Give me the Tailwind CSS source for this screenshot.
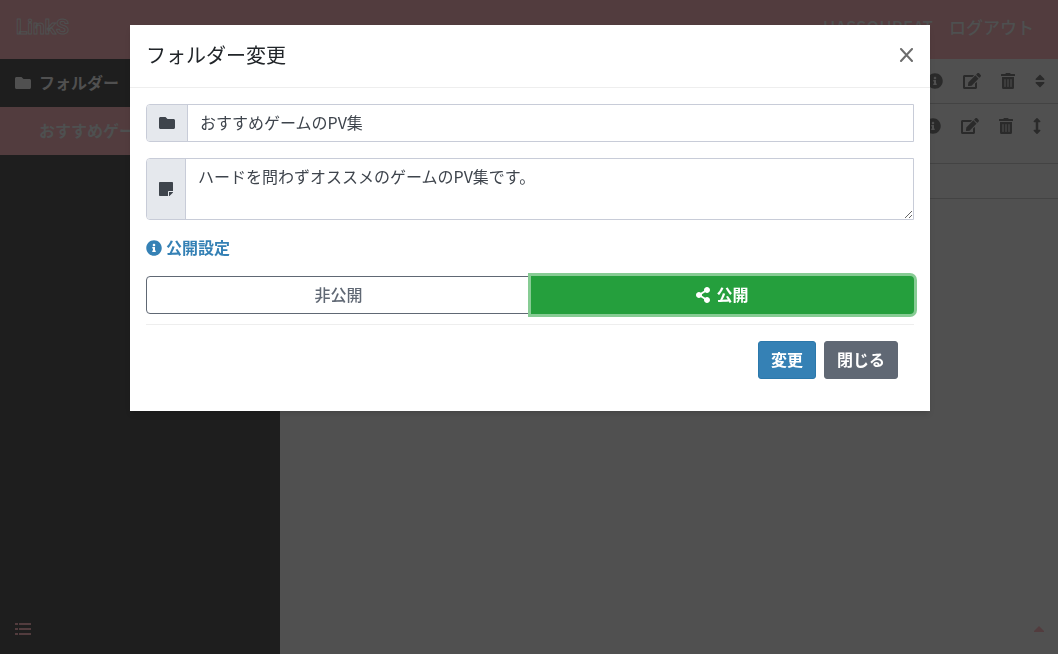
<!DOCTYPE html>
<html lang="ja">
<head>
<meta charset="utf-8">
<meta name="viewport" content="width=device-width, initial-scale=1">
<title>LinkS</title>
<script src="https://cdn.jsdelivr.net/npm/@tailwindcss/browser@4"></script>
</head>
<body class="min-h-screen bg-[#505050] font-['Noto_Sans_CJK_JP',sans-serif] text-base text-[#212529]">
<svg class="hidden" aria-hidden="true">
  <symbol id="folder" viewBox="0 0 512 512"><path d="M464 128H272l-64-64H48C21.49 64 0 85.49 0 112v288c0 26.51 21.49 48 48 48h416c26.51 0 48-21.49 48-48V176c0-26.51-21.49-48-48-48z"/></symbol>
  <symbol id="note" viewBox="0 0 448 512"><path d="M312 320h136V56c0-13.3-10.7-24-24-24H24C10.7 32 0 42.7 0 56v400c0 13.3 10.7 24 24 24h264V344c0-13.2 10.8-24 24-24zm129 55l-98 98c-4.5 4.5-10.6 7-17 7h-6V352h128v6.1c0 6.3-2.5 12.4-7 16.9z"/></symbol>
  <symbol id="info" viewBox="0 0 512 512"><path d="M256 8C119.043 8 8 119.083 8 256c0 136.997 111.043 248 248 248s248-111.003 248-248C504 119.083 392.957 8 256 8zm0 110c23.196 0 42 18.804 42 42s-18.804 42-42 42-42-18.804-42-42 18.804-42 42-42zm56 254c0 6.627-5.373 12-12 12h-88c-6.627 0-12-5.373-12-12v-24c0-6.627 5.373-12 12-12h12v-64h-12c-6.627 0-12-5.373-12-12v-24c0-6.627 5.373-12 12-12h64c6.627 0 12 5.373 12 12v100h12c6.627 0 12 5.373 12 12v24z"/></symbol>
  <symbol id="share" viewBox="0 0 448 512"><path d="M352 320c-22.608 0-43.387 7.819-59.79 20.895l-102.486-64.054a96.551 96.551 0 0 0 0-41.683l102.486-64.054C308.613 184.181 329.392 192 352 192c53.019 0 96-42.981 96-96S405.019 0 352 0s-96 42.981-96 96c0 7.158.79 14.13 2.276 20.841L155.79 180.895C139.387 167.819 118.608 160 96 160c-53.019 0-96 42.981-96 96s42.981 96 96 96c22.608 0 43.387-7.819 59.79-20.895l102.486 64.054A96.301 96.301 0 0 0 256 416c0 53.019 42.981 96 96 96s96-42.981 96-96-42.981-96-96-96z"/></symbol>
  <symbol id="edit" viewBox="0 0 576 512"><path d="M402.6 83.2l90.2 90.2c3.8 3.8 3.8 10 0 13.8L274.4 405.6l-92.8 10.3c-12.4 1.4-22.9-9.1-21.5-21.5l10.3-92.8L388.8 83.2c3.8-3.8 10-3.8 13.8 0zm162-22.9l-48.8-48.8c-15.2-15.2-39.9-15.2-55.2 0l-35.4 35.4c-3.8 3.8-3.8 10 0 13.8l90.2 90.2c3.8 3.8 10 3.8 13.8 0l35.4-35.4c15.2-15.3 15.2-40 0-55.2zM384 346.2V448H64V128h229.8c3.2 0 6.2-1.3 8.5-3.5l40-40c7.6-7.6 2.2-20.5-8.5-20.5H48C21.5 64 0 85.5 0 112v352c0 26.5 21.5 48 48 48h352c26.5 0 48-21.5 48-48V306.2c0-10.7-12.9-16-20.5-8.5l-40 40c-2.2 2.3-3.5 5.3-3.5 8.5z"/></symbol>
  <symbol id="trash" viewBox="0 0 448 512"><path d="M32 464a48 48 0 0 0 48 48h288a48 48 0 0 0 48-48V128H32zm272-256a16 16 0 0 1 32 0v224a16 16 0 0 1-32 0zm-96 0a16 16 0 0 1 32 0v224a16 16 0 0 1-32 0zm-96 0a16 16 0 0 1 32 0v224a16 16 0 0 1-32 0zM432 32H312l-9.4-18.7A24 24 0 0 0 281.1 0H166.8a23.72 23.72 0 0 0-21.4 13.3L136 32H16A16 16 0 0 0 0 48v32a16 16 0 0 0 16 16h416a16 16 0 0 0 16-16V48a16 16 0 0 0-16-16z"/></symbol>
  <symbol id="sort" viewBox="0 0 320 512"><path d="M41 288h238c21.4 0 32.1 25.9 17 41L177 448c-9.4 9.4-24.6 9.4-33.9 0L24 329c-15.1-15.1-4.4-41 17-41zm255-105L177 64c-9.4-9.4-24.6-9.4-33.9 0L24 183c-15.1 15.1-4.4 41 17 41h238c21.4 0 32.1-25.9 17-41z"/></symbol>
  <symbol id="move" viewBox="0 0 256 512"><path d="M214.059 377.941H168V134.059h46.059c21.382 0 32.09-25.851 16.971-40.971L144.971 7.029c-9.373-9.373-24.568-9.373-33.941 0L24.971 93.088c-15.119 15.119-4.411 40.971 16.971 40.971H88v243.882H41.941c-21.382 0-32.09 25.851-16.971 40.971l86.059 86.059c9.373 9.373 24.568 9.373 33.941 0l86.059-86.059c15.12-15.119 4.412-40.971-16.97-40.971z"/></symbol>
</svg>

<div class="flex min-h-screen flex-col">
  <header class="flex h-[59px] items-center justify-between bg-[#523c3e] pr-6 pl-4 text-[#4e5050]">
    <a href="#" class="pb-1 font-[Roboto,sans-serif] text-[21px] font-bold text-[#523c3e] [-webkit-text-stroke:1px_#4e5050]">LinkS</a>
    <nav class="flex items-center gap-4 pb-1.5 text-[17px] font-medium">
      <a href="#">HASSOUBEAT</a>
      <a href="#">ログアウト</a>
    </nav>
  </header>
  <div class="flex flex-1">
    <aside class="flex w-[280px] shrink-0 flex-col bg-[#1e1e1e] text-[#505050]">
      <h2 class="flex h-12 items-center gap-2 px-[15px] font-bold"><svg class="size-4 fill-current"><use href="#folder"/></svg><span class="pb-0.5">フォルダー</span></h2>
      <a href="#" class="flex h-12 items-center bg-[#523c3e] pb-0.5 pl-[39px] font-bold text-[#4e5050]">おすすめゲームのPV集</a>
      <button type="button" aria-label="一覧" class="mt-auto mb-[18px] ml-[15px] w-4 text-[#523c3e]">
        <svg viewBox="0 0 16 14" class="h-[14px] w-4 fill-current"><path d="M0 1h3v2H0zM4 1h12v2H4zM0 6h3v2H0zM4 6h12v2H4zM0 11h3v2H0zM4 11h12v2H4z"/></svg>
      </button>
    </aside>
    <main class="flex flex-1 flex-col text-[#2a2a2a]">
      <div class="flex h-[45px] items-center justify-end border-b border-[#434343] pr-[13px]">
        <div class="flex items-center gap-5">
          <button type="button" aria-label="情報"><svg class="size-4 fill-current"><use href="#info"/></svg></button>
          <button type="button" aria-label="編集"><svg class="h-4 w-[18px] fill-current"><use href="#edit"/></svg></button>
          <button type="button" aria-label="削除"><svg class="h-4 w-[14px] fill-current"><use href="#trash"/></svg></button>
          <button type="button" aria-label="並べ替え"><svg class="h-4 w-[10px] fill-current"><use href="#sort"/></svg></button>
        </div>
      </div>
      <div class="flex h-[60px] items-start justify-end border-b border-[#434343] pt-[14px] pr-[17px]">
        <div class="flex items-center gap-5">
          <button type="button" aria-label="情報"><svg class="size-4 fill-current"><use href="#info"/></svg></button>
          <button type="button" aria-label="編集"><svg class="h-4 w-[18px] fill-current"><use href="#edit"/></svg></button>
          <button type="button" aria-label="削除"><svg class="h-4 w-[14px] fill-current"><use href="#trash"/></svg></button>
          <button type="button" aria-label="移動"><svg class="h-4 w-2 fill-current"><use href="#move"/></svg></button>
        </div>
      </div>
      <div class="h-[35px] border-b border-[#434343]"></div>
      <button type="button" aria-label="上へ" class="mt-auto mr-[14px] mb-[22px] self-end text-[#523c3e]">
        <svg viewBox="0 0 10 6" class="h-[6px] w-[10px] fill-current"><path d="M5 0l5 5v1H0V5z"/></svg>
      </button>
    </main>
  </div>
</div>

<div class="fixed inset-0 overflow-auto pt-[25px] pl-0.5">
  <div role="dialog" aria-modal="true" aria-labelledby="title" class="mx-auto max-w-[800px] bg-white pb-8 shadow-md">
    <div class="flex h-[63px] items-center justify-between border-b border-[#eeeeee] px-4 pb-0.5">
      <h1 id="title" class="text-xl">フォルダー変更</h1>
      <button type="button" aria-label="閉じる" class="text-[#6c6c6c]"><svg viewBox="0 0 15 14" class="h-[14px] w-[15px] fill-none stroke-current stroke-2"><path d="M2 1l11 12M13 1L2 13" stroke-linecap="round"/></svg></button>
    </div>
    <form class="px-4 pt-4">
      <div class="flex h-[38px] rounded-l border border-[#c8ccd8]">
        <label for="name" aria-label="フォルダー名" class="flex items-center rounded-l-[3px] border-r border-[#c8ccd8] bg-[#e5e8ed] px-3 text-[#3e444c]"><svg class="size-4 fill-current"><use href="#folder"/></svg></label>
        <input id="name" type="text" value="おすすめゲームのPV集" class="min-w-0 flex-1 px-3 pb-0.5 text-[#3e444c] outline-none">
      </div>
      <div class="mt-4 flex h-[62px] rounded-l border border-[#c8ccd8]">
        <label for="memo" aria-label="説明" class="flex items-center rounded-l-[3px] border-r border-[#c8ccd8] bg-[#e5e8ed] px-3 text-[#3e444c]"><svg class="h-4 w-[14px] fill-current"><use href="#note"/></svg></label>
        <textarea id="memo" rows="2" class="h-full min-w-0 flex-1 resize-y px-3 py-[5px] leading-6 text-[#3e444c] outline-none">ハードを問わずオススメのゲームのPV集です。</textarea>
      </div>
      <a href="#" class="mt-4 flex h-6 items-center gap-1 font-bold text-[#3581b5]"><svg class="size-4 fill-current"><use href="#info"/></svg><span class="pb-0.5">公開設定</span></a>
      <div class="mt-4 flex" role="group" aria-label="公開設定">
        <button type="button" class="h-[38px] flex-1 rounded-l border border-[#606874] pb-0.5 font-medium text-[#606874]">非公開</button>
        <button type="button" aria-pressed="true" class="flex h-[38px] flex-1 items-center justify-center gap-1.5 rounded-r bg-[#259f3d] font-bold text-white ring-3 ring-[#87cc94]"><svg class="h-4 w-[14px] fill-current"><use href="#share"/></svg><span class="pb-0.5">公開</span></button>
      </div>
      <div class="mt-[10px] flex justify-end gap-2 border-t border-[#eeeeee] px-4 pt-4">
        <button type="submit" class="h-[38px] rounded-[3px] border border-[#2b78ab] bg-[#3581b5] px-3 pb-0.5 font-bold text-white">変更</button>
        <button type="button" class="h-[38px] rounded-[3px] border border-[#606874] bg-[#606874] px-3 pb-0.5 font-bold text-white">閉じる</button>
      </div>
    </form>
  </div>
</div>
</body>
</html>
